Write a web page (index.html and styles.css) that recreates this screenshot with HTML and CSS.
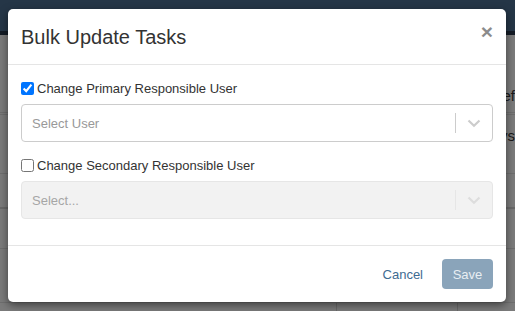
FILE: index.html
```html
<!DOCTYPE html>
<html lang="en">
<head>
    <title>Bulk Update Tasks</title>
    <meta charset="UTF-8">
    <meta name="viewport" content="width=device-width, initial-scale=1.0">
    <link rel="stylesheet" href="styles.css">
</head>
<body>
    <!-- Page behind the modal -->
    <div class="page">
        <div class="navbar"></div>
        <div class="table">
            <div class="row row-head"><span class="cell-text">Ref</span></div>
            <div class="row row-days"><span class="cell-text">Days</span></div>
            <div class="row row-short"></div>
            <div class="row row-mid"></div>
            <div class="row row-tall"></div>
            <div class="row row-last">
                <span class="col col-a"></span>
                <span class="col col-b"></span>
            </div>
        </div>
    </div>

    <div class="backdrop"></div>

    <div class="modal">
        <div class="modal-header">
            <h4 class="modal-title">Bulk Update Tasks</h4>
            <button class="close" type="button">&times;</button>
        </div>

        <div class="modal-body">
            <div class="form-group">
                <label class="check-label">
                    <input type="checkbox" checked>
                    <span>Change Primary Responsible User</span>
                </label>
                <div class="select">
                    <span class="select-placeholder">Select User</span>
                    <span class="select-indicators">
                        <span class="select-sep"></span>
                        <svg class="chevron" width="20" height="20" viewBox="0 0 20 20">
                            <path d="M4.5 7.5l5.5 5.2 5.5-5.2" fill="none" stroke="currentColor" stroke-width="2.2"/>
                        </svg>
                    </span>
                </div>
            </div>

            <div class="form-group">
                <label class="check-label">
                    <input type="checkbox">
                    <span>Change Secondary Responsible User</span>
                </label>
                <div class="select select-disabled">
                    <span class="select-placeholder">Select...</span>
                    <span class="select-indicators">
                        <span class="select-sep"></span>
                        <svg class="chevron" width="20" height="20" viewBox="0 0 20 20">
                            <path d="M4.5 7.5l5.5 5.2 5.5-5.2" fill="none" stroke="currentColor" stroke-width="2.2"/>
                        </svg>
                    </span>
                </div>
            </div>
        </div>

        <div class="modal-footer">
            <button class="btn btn-link" type="button">Cancel</button>
            <button class="btn btn-save" type="button" disabled>Save</button>
        </div>
    </div>
</body>
</html>
```

FILE: styles.css
```css
* {
    margin: 0;
    padding: 0;
    box-sizing: border-box;
    font-family: "Liberation Sans", Arial, sans-serif;
}

html,
body {
    overflow: hidden;
}

body {
    width: 515px;
    height: 311px;
    position: relative;
    background: #f6f6f6;
}

/* Page behind */
.navbar {
    height: 35px;
    background: #4b6d8e;
    border-bottom: 4px solid #26364a;
}

.table {
    display: flex;
    flex-direction: column;
}

.row {
    border-bottom: 1px solid #dcdcdc;
    display: flex;
    align-items: center;
    justify-content: flex-end;
}

.cell-text {
    font-size: 15px;
    color: #333;
}

.row-head {
    height: 80px;
    border-bottom: 3px double #dcdcdc;
    padding-top: 44px;
}

.row-days {
    height: 59px;
    padding-bottom: 18px;
}

.row-short { height: 35px; border-bottom: 2px solid #d2d2d2; }
.row-mid { height: 40px; }
.row-tall { height: 54px; }

.row-last {
    height: 8px;
    align-items: stretch;
    justify-content: flex-start;
    border-bottom: none;
}

.col { border-right: 1px solid #d2d2d2; }
.col-a { width: 337px; }
.col-b { width: 121px; }

.backdrop {
    position: absolute;
    inset: 0;
    background: rgba(0, 0, 0, 0.5);
}

/* Modal */
.modal {
    position: absolute;
    top: 9px;
    left: 8px;
    width: 498px;
    height: 293px;
    background: #fff;
    border-radius: 5px;
    box-shadow: 0 3px 9px rgba(0, 0, 0, 0.5);
    display: flex;
    flex-direction: column;
}

.modal-header {
    display: flex;
    justify-content: space-between;
    align-items: flex-start;
    padding: 17px 13px 16px;
    border-bottom: 1px solid #e5e5e5;
}

.modal-title {
    font-size: 20px;
    font-weight: normal;
    line-height: 22px;
    color: #333;
}

.close {
    background: none;
    border: none;
    font-size: 21px;
    font-weight: bold;
    line-height: 1;
    color: #000;
    opacity: 0.45;
    margin-top: -5px;
    cursor: pointer;
}

.modal-body {
    flex: 1;
    padding: 15px 13px 12px;
}

.form-group {
    margin-bottom: 15px;
}

.form-group:last-child {
    margin-bottom: 14px;
}

.check-label {
    display: flex;
    align-items: center;
    gap: 3px;
    height: 16px;
    margin-bottom: 8px;
    font-size: 13px;
    color: #333;
}

.check-label input {
    width: 13px;
    height: 13px;
    margin: 0;
}

.select {
    height: 38px;
    border: 1px solid #ccc;
    border-radius: 4px;
    background: #fff;
    display: flex;
    align-items: center;
    justify-content: space-between;
}

.select-placeholder {
    padding-left: 10px;
    font-size: 13px;
    color: #999;
}

.select-indicators {
    display: flex;
    align-items: center;
    height: 100%;
}

.select-sep {
    width: 1px;
    height: 20px;
    background: #ccc;
}

.chevron {
    color: #ccc;
    margin: 0 8px;
}

.select-disabled {
    background: #f2f2f2;
    border-color: #e6e6e6;
}

.select-disabled .select-placeholder {
    color: #a6a6a6;
}

.select-disabled .select-sep {
    background: #e6e6e6;
}

.select-disabled .chevron {
    color: #ddd;
}

.modal-footer {
    display: flex;
    justify-content: flex-end;
    align-items: center;
    gap: 6px;
    padding: 13px 13px;
    border-top: 1px solid #e5e5e5;
}

.btn {
    height: 30px;
    padding: 0 12px;
    font-size: 13px;
    border-radius: 4px;
    border: 1px solid transparent;
    cursor: pointer;
}

.btn-link {
    background: none;
    color: #3e6b92;
}

.btn-save {
    width: 51px;
    padding: 0;
    background: #8aa4ba;
    color: #e8eef3;
}
```
